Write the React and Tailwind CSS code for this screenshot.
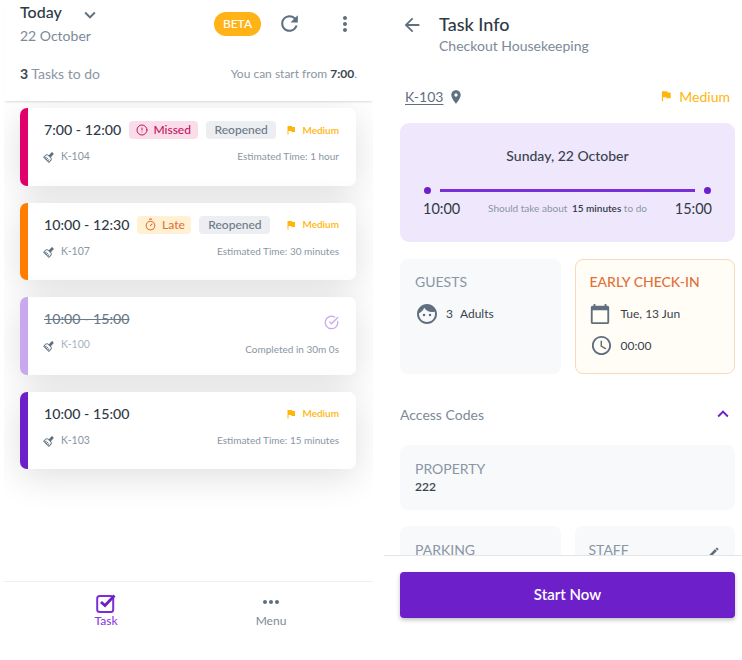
import React from "react";
import { MdExpandMore, MdExpandLess, MdRefresh, MdMoreVert, MdMoreHoriz, MdFlag, MdCleaningServices, MdArrowBack, MdPlace, MdFace, MdCalendarToday, MdAccessTime, MdEdit } from "react-icons/md";
import { CircleAlert, Timer, CircleCheckBig } from "lucide-react";

function Medium({ large }) {
  return (
    <span className={large ? "flex items-center gap-[6px] text-[14px] text-[#ffb60a]" : "flex items-center gap-[5px] text-[10px] font-semibold text-[#ffb60a]"}>
      <MdFlag size={large ? 14 : 12} />
      Medium
    </span>
  );
}

function Card({ bar, time, badges, room, foot, done }) {
  return (
    <div className="flex h-[77.5px] shrink-0 rounded-[7px] bg-white shadow-[0_8px_36px_rgba(0,0,0,0.13)] overflow-hidden">
      <div className={`w-2 shrink-0 ${bar}`} />
      <div className="flex-1 pl-4 pr-[17px] pt-[12px]">
        <div className="flex items-center h-[20px]">
          <span className={done ? "text-[14.2px] font-medium text-[#6b7a8a] line-through" : "text-[14.2px] font-medium text-[#2f3a45]"}>{time}</span>
          {badges}
          <span className="ml-auto">{done ? <CircleCheckBig size={15} className="text-[#c9a8ee] mt-[6px]" /> : <Medium />}</span>
        </div>
        <div className={`flex items-center justify-between text-[#8a96a3] text-[10.5px] ${done ? "mt-[4px]" : "mt-[9px]"}`}>
          <span className="flex items-center gap-[6px]">
            <MdCleaningServices size={11} className="rotate-45 text-[#5f6f7f]" />
            <span className={done ? "text-[#a9b3bd]" : ""}>{room}</span>
          </span>
          <span className={done ? "mt-[9px] text-[10px]" : "text-[10px]"}>{foot}</span>
        </div>
      </div>
    </div>
  );
}

const Badge = ({ className, children }) => (
  <span className={`flex items-center justify-center gap-[5px] h-[18px] rounded-[4px] text-[12px] font-medium ${className}`}>{children}</span>
);

function Box({ className = "", children }) {
  return <div className={`rounded-[8px] bg-[#f8f9fb] ${className}`}>{children}</div>;
}

export default function App() {
  return (
    <div className="flex w-[742px] h-[660px] overflow-hidden bg-white text-[#2f3a45] font-['Lato','Open_Sans',sans-serif]">
      <div className="w-[373px] h-full shrink-0 flex flex-col">
        <header className="relative z-10 ml-[4px] pl-4 pr-4 h-[101px] shrink-0 bg-white shadow-[0_2px_2px_-1px_rgba(0,0,0,0.14)]">
          <div className="flex items-start">
            <div className="pt-[2px]">
              <div className="flex items-center h-[20px]">
                <span className="text-[16px] font-medium leading-[20px]">Today</span>
                <MdExpandMore size={22} className="ml-[17px] mt-[6px] text-[#5f6f7f]" />
              </div>
              <div className="text-[14px] text-[#7d8a97] mt-[5px] leading-[18px]">22 October</div>
            </div>
            <div className="ml-auto flex items-center mt-[11px]">
              <span className="flex items-center justify-center w-[47px] h-[24px] rounded-full bg-[#ffb317] text-white text-[12px] font-medium">BETA</span>
              <MdRefresh size={25} className="ml-[16px] text-[#5f6f7f]" />
              <MdMoreVert size={24} className="ml-[31px] text-[#5f6f7f]" />
            </div>
          </div>
          <div className="flex items-center justify-between mt-[18px]">
            <span className="text-[14px] text-[#8a96a3]"><b className="text-[#3b4652] font-bold">3</b> Tasks to do</span>
            <span className="text-[12px] text-[#8a96a3]">You can start from <b className="text-[#3b4652] font-bold">7:00</b>.</span>
          </div>
        </header>
        <main className="flex-1 ml-[4px] overflow-hidden pl-4 pr-[17px] pt-[7px] flex flex-col gap-[17px]">
          <Card
            bar="bg-[#e2006a]"
            time="7:00 - 12:00"
            room="K-104"
            foot="Estimated Time: 1 hour"
            badges={
              <>
                <Badge className="ml-2 w-[69px] bg-[#fbdde9] text-[#c2185f]"><CircleAlert size={12} />Missed</Badge>
                <Badge className="ml-2 w-[70px] bg-[#eceef1] text-[#6b7a8a]">Reopened</Badge>
              </>
            }
          />
          <Card
            bar="bg-[#ff7d00]"
            time="10:00 - 12:30"
            room="K-107"
            foot="Estimated Time: 30 minutes"
            badges={
              <>
                <Badge className="ml-2 w-[54px] bg-[#fff1d2] text-[#e2703a]"><Timer size={13} />Late</Badge>
                <Badge className="ml-2 w-[71px] bg-[#eceef1] text-[#6b7a8a]">Reopened</Badge>
              </>
            }
          />
          <Card bar="bg-[#c9a8ee]" time="10:00 - 15:00" room="K-100" foot="Completed in 30m 0s" done />
          <Card bar="bg-[#6d1fca]" time="10:00 - 15:00" room="K-103" foot="Estimated Time: 15 minutes" />
        </main>
        <nav className="h-[79px] ml-[4px] shrink-0 border-t border-[#eeeff1] flex bg-white relative z-10">
          <div className="w-[204px] flex flex-col items-center pt-[10px] text-[#8a3fe0]">
            <svg width="22" height="22" viewBox="0 0 22 22" fill="none">
              <rect x="2.2" y="4" width="16" height="16" rx="2.5" stroke="#7a2fd6" strokeWidth="2" />
              <path d="M6 10 L10 13.5 L19.5 3.5" stroke="#6d1fca" strokeWidth="2.8" />
            </svg>
            <span className="text-[12px] font-medium leading-[16px] -mt-[1px]">Task</span>
          </div>
          <div className="w-[126px] flex flex-col items-center pt-[8px] text-[#7d8a97]">
            <MdMoreHoriz size={24} className="text-[#5f6f7f]" />
            <span className="text-[12px] leading-[16px] -mt-[1px]">Menu</span>
          </div>
        </nav>
      </div>

      <div className="flex-1 h-full flex flex-col min-w-0">
        <div className="flex-1 overflow-hidden min-h-0 pl-[27px] pr-[7px]">
          <div className="flex pt-[13px]">
            <MdArrowBack size={22} className="ml-[1px] mt-[1px] text-[#5f6f7f]" />
            <div className="ml-[16px]">
              <div className="text-[18px] font-medium leading-[22px] text-[#2f3a45]">Task Info</div>
              <div className="text-[14px] text-[#7d8a97] leading-[20px] mt-[1px]">Checkout Housekeeping</div>
            </div>
          </div>
          <div className="flex items-center mt-[29px] h-[22px] pl-[5px] pr-[5px]">
            <span className="text-[14px] text-[#5f6f7f] underline underline-offset-2">K-103</span>
            <MdPlace size={16} className="ml-[5px] mt-[2px] text-[#5f6f7f]" />
            <span className="ml-auto"><Medium large /></span>
          </div>
          <section className="mt-[16px] h-[119px] rounded-[9px] bg-[#efe7fb] px-[19px] pt-[24px]">
            <div className="text-center text-[14px] font-medium leading-[18px] text-[#39434e]">Sunday, 22 October</div>
            <div className="flex items-center mt-[22px] px-[5px]">
              <span className="w-[7px] h-[7px] rounded-full bg-[#6d1fca]" />
              <span className="flex-1 h-[2.5px] mx-[9px] bg-[#7a2fd6]" />
              <span className="w-[7px] h-[7px] rounded-full bg-[#6d1fca]" />
            </div>
            <div className="flex items-center justify-between mt-[4px] px-[5px] -mx-[1px]">
              <span className="text-[14.5px] text-[#2f3a45]">10:00</span>
              <span className="text-[10px] text-[#8a96a3]">Should take about <b className="ml-[2px] font-semibold text-[#2f3a45]">15 minutes</b> to do</span>
              <span className="text-[14.5px] text-[#2f3a45]">15:00</span>
            </div>
          </section>
          <div className="grid grid-cols-2 gap-[14px] mt-[17px]">
            <Box className="h-[115px] px-[15px] pt-[13px]">
              <div className="text-[14px] text-[#8a96a3] leading-[20px]">GUESTS</div>
              <div className="flex items-center mt-[10px] text-[12px] text-[#39434e] gap-[7px]">
                <MdFace size={24} className="text-[#5f6f7f]" />
                <span>3</span><span>Adults</span>
              </div>
            </Box>
            <div className="h-[115px] rounded-[8px] border border-[#f8d9bf] bg-[#fffdf5] px-[14px] pt-[12px]">
              <div className="text-[14px] font-medium text-[#e2703a] leading-[20px]">EARLY CHECK-IN</div>
              <div className="flex items-center mt-[11px] gap-[10px] text-[12px] text-[#39434e]">
                <MdCalendarToday size={22} className="-ml-[1px] text-[#5f6f7f]" />Tue, 13 Jun
              </div>
              <div className="flex items-center mt-[9px] gap-[8px] text-[12px] text-[#39434e]">
                <MdAccessTime size={23} className="text-[#5f6f7f]" />00:00
              </div>
            </div>
          </div>
          <div className="flex items-center justify-between mt-[30px] h-[20px]">
            <span className="text-[14px] text-[#7d8a97]">Access Codes</span>
            <MdExpandLess size={22} className="text-[#6d1fca] mr-[1px]" />
          </div>
          <Box className="mt-[21px] h-[65px] px-[15px] pt-[15px]">
            <div className="text-[14px] text-[#8a96a3] leading-[18px]">PROPERTY</div>
            <div className="text-[12px] font-semibold text-[#39434e] leading-[18px]">222</div>
          </Box>
          <div className="grid grid-cols-2 gap-[14px] mt-[16px]">
            <Box className="h-[80px] px-[15px] pt-[15px]"><div className="text-[14px] text-[#8a96a3] leading-[18px]">PARKING</div></Box>
            <Box className="h-[80px] pl-[14px] pr-[15px] pt-[15px] flex justify-between">
              <div className="text-[14px] text-[#8a96a3] leading-[18px]">STAFF</div>
              <MdEdit size={12} className="text-[#5f6f7f] mt-[5px]" />
            </Box>
          </div>
        </div>
        <footer className="h-[105px] shrink-0 ml-[11px] border-t border-[#e3e5e8] pt-[16px] pl-[16px] pr-[7px] bg-white">
          <button className="w-full h-[46px] pb-[1px] rounded-[4px] bg-[#6d1fca] text-white text-[15px] font-semibold shadow-[0_2px_4px_rgba(0,0,0,0.25)]">Start Now</button>
        </footer>
      </div>
    </div>
  );
}
